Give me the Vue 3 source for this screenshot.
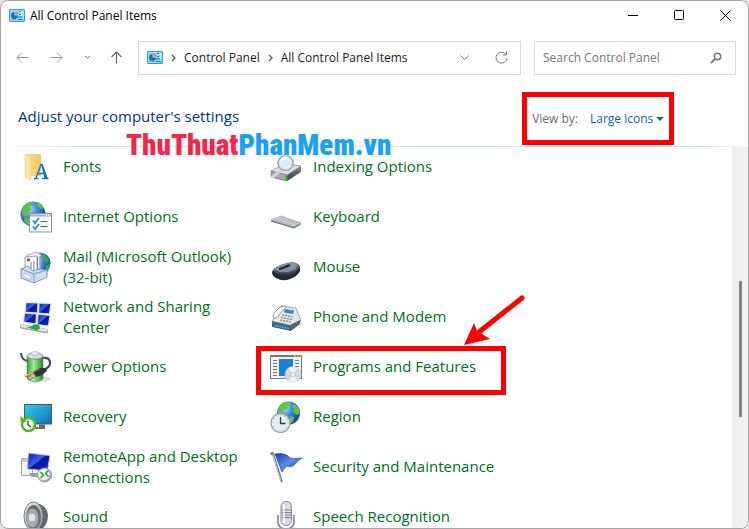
<template>
  <main class="window">
    <!-- Icon definitions -->
    <svg class="defs" width="0" height="0" aria-hidden="true">
      <defs>
        <linearGradient id="g-folder" x1="0" y1="0" x2="1" y2="0">
          <stop offset="0" stop-color="#f8dc8c" />
          <stop offset="1" stop-color="#f2ca62" />
        </linearGradient>
        <radialGradient id="g-globe" cx="0.35" cy="0.3" r="0.75">
          <stop offset="0" stop-color="#a9dcff" />
          <stop offset="0.45" stop-color="#3c86d8" />
          <stop offset="1" stop-color="#123c96" />
        </radialGradient>
        <linearGradient id="g-screen" x1="0" y1="0" x2="1" y2="1">
          <stop offset="0" stop-color="#0a18a8" />
          <stop offset="0.45" stop-color="#3a62e8" />
          <stop offset="0.5" stop-color="#0814a0" />
          <stop offset="1" stop-color="#1430c8" />
        </linearGradient>
        <linearGradient id="g-battery" x1="0" y1="0" x2="1" y2="0">
          <stop offset="0" stop-color="#2f9e33" />
          <stop offset="0.4" stop-color="#a4ee8e" />
          <stop offset="1" stop-color="#27892c" />
        </linearGradient>
        <linearGradient id="g-monitor" x1="0" y1="0" x2="1" y2="1">
          <stop offset="0" stop-color="#35d0e6" />
          <stop offset="1" stop-color="#0e6cbe" />
        </linearGradient>
        <linearGradient id="g-metal" x1="0" y1="0" x2="1" y2="1">
          <stop offset="0" stop-color="#f4f4f6" />
          <stop offset="1" stop-color="#8c9096" />
        </linearGradient>
        <linearGradient id="g-dark" x1="0" y1="0" x2="0" y2="1">
          <stop offset="0" stop-color="#8e98a6" />
          <stop offset="1" stop-color="#2c333d" />
        </linearGradient>
        <linearGradient id="g-flag" x1="0" y1="0" x2="1" y2="1">
          <stop offset="0" stop-color="#1c3cae" />
          <stop offset="0.5" stop-color="#5c8cf0" />
          <stop offset="1" stop-color="#1a35a0" />
        </linearGradient>
      </defs>

      <symbol id="panel" viewBox="0 0 16 13">
        <rect x="0.5" y="0.5" width="15" height="12" rx="0.5" fill="#8fdcfb" stroke="#2b9fe0" />
        <path d="M5.5 3v3.500H9A3.500 3.500 0 1 1 5.500 3Z" fill="#1470c4" />
        <path d="M6.500 2A3.500 3.500 0 0 1 9.500 5.500h-3Z" fill="#f28a1c" />
        <path d="M11 3.500h3M11 6h3M3 10.500h3" stroke="#fff" />
        <path d="M10 2.500h2M10 5.500h2M9 8h4" stroke="#1470c4" />
        <path d="M2 10.500h5" stroke="#f28a1c" />
        <path d="M9 10.500h5" stroke="#1478cc" />
      </symbol>

      <symbol id="fonts" viewBox="0 0 32 32">
        <path d="M5 3h16v22H8L5 24Z" fill="url(#g-folder)" />
        <path d="M5 3l6 3.500V29.500L5 26Z" fill="#fae6a8" stroke="#e9c76a" stroke-width="0.500" />
        <path d="M14 27.500h4.500M22 27.500h6.500M16 27 21 13.500h1L27 27M18 22.500h6" fill="none" stroke="#1173c4" stroke-width="1.300" />
        <path d="M21 13.500h1.500L27.500 27.500H24.500Z" fill="#1173c4" />
      </symbol>

      <symbol id="internet" viewBox="0 0 32 32">
        <circle cx="13" cy="13" r="12.500" fill="url(#g-globe)" />
        <path d="M3 6q4-5 9-5l1 3-3 2 1 3-4 3-1 5-4-4Zm14-5q5 1 7 6l-3 1-4-3ZM5 17l5 1 3 3-2 4q-5-2-7-5Z" fill="#5fc043" />
        <rect x="9.500" y="12.500" width="22" height="18.500" fill="#f7f8fa" stroke="#8d929b" />
        <path d="M10 14.500h21" stroke="#a7adb8" stroke-width="2" />
        <path d="M26 14.500h4" stroke="#fff" stroke-dasharray="1 1" />
        <path d="M13 19.500l2 2.500 4-5M13 25.500l2 2.500 4-5" fill="none" stroke="#168fd0" stroke-width="1.800" />
        <path d="M20.500 20.500h7M20.500 25.500h7" stroke="#5a6068" />
      </symbol>

      <symbol id="mail" viewBox="0 0 32 32">
        <circle cx="20" cy="12" r="10.500" fill="url(#g-globe)" />
        <path d="M19 2q8 1 10 8l-3 2-2-5-4-2ZM26 15l4-2q0 7-5 9Z" fill="#32ad43" />
        <path d="M7 4l10-3 4 3v17L7 20Z" fill="#e9effa" stroke="#7f91b5" stroke-width="0.700" />
        <path d="M5 6l12-1v17H5Z" fill="#fff" stroke="#7c8dae" stroke-width="0.800" />
        <path d="M11 11v10M14 10v11M17.500 6v15M20 5v15M22.500 7v12" stroke="#6483bb" />
        <path d="M7 7.500h3v3H7Z" fill="#e4401c" />
        <path d="M1 18l7-3 5 5 7-2 7 1v7L14 32 1 27Z" fill="#cfdef6" stroke="#6b80ab" stroke-width="0.800" />
        <path d="M1 18l13 5 13-4M14 23v9" fill="none" stroke="#8197c1" />
        <path d="M4 22l7 3v4l-7-3Z" fill="#edf4ff" stroke="#90a6d0" stroke-width="0.500" />
      </symbol>

      <symbol id="network" viewBox="0 0 32 32">
        <g fill="url(#g-screen)" stroke="#e4e6ec" stroke-width="1.200">
          <path d="M6 1.500 18 2 17.500 12 5 11Z" />
          <path d="M19 2 31 2.500 29.500 13 18.500 12Z" />
          <path d="M4.500 12 16.500 13 16 23 3.500 21Z" />
          <path d="M18 13 30 14.500 28.500 25 17 23.500Z" />
        </g>
        <path d="M2 25.500 26 30" stroke="#9fa5aa" stroke-width="4.500" stroke-linecap="round" />
        <path d="M2 25 26 29.500" stroke="#e4e9e5" stroke-width="2.500" stroke-linecap="round" />
        <path d="M6 26l5-.5 3-2h5l1 4-3 2Z" fill="#23ac43" />
      </symbol>

      <symbol id="power" viewBox="0 0 32 32">
        <ellipse cx="21" cy="28" rx="10" ry="3" fill="#ddd" />
        <path d="M1 2q0 6 6 8" fill="none" stroke="#4b4e63" stroke-width="2" />
        <path d="M7 5v23q8 6 16 0V5Z" fill="url(#g-battery)" stroke="#338337" stroke-width="0.500" />
        <ellipse cx="15" cy="5" rx="8" ry="3.200" fill="#d9dcde" stroke="#73777c" stroke-width="0.700" />
        <ellipse cx="15" cy="2.500" rx="4" ry="1.800" fill="#f5f6f6" stroke="#91959a" stroke-width="0.600" />
        <path d="M23 7q7-1 7 5 0 4-5 6" fill="none" stroke="#4b4e63" stroke-width="2.200" />
        <path d="M13 21l7-4 6 0 1 3-5 4-6 2Z" fill="#32343b" />
        <path d="M14 21l6-3" stroke="#70747e" />
        <path d="M5 25.500l9-4M8 28l8-3" stroke="#9a7442" stroke-width="2.200" />
        <path d="M5 25l8-3.500M8 27.500l7-2.500" stroke="#f2deae" />
      </symbol>

      <symbol id="recovery" viewBox="0 0 32 32">
        <rect x="4.500" y="3.500" width="27" height="19.500" fill="url(#g-monitor)" stroke="#4e555b" />
        <path d="M19 23.500h6v3h-6Z" fill="#62696e" />
        <path d="M15 27h10" stroke="#464b4f" stroke-width="1.500" />
        <circle cx="8.500" cy="23.500" r="6.500" fill="#fff" stroke="#54b71b" stroke-width="2.600" />
        <path d="M0 18h4l-3 4H0Z" fill="#fff" />
        <path d="M0.500 15v6h6.500Z" fill="#54b71b" />
        <path d="M8 19.500V24l3 2" fill="none" stroke="#333" stroke-width="1.200" />
      </symbol>

      <symbol id="remote" viewBox="0 0 32 32">
        <path d="M1.500 7.500h11v17h-11Z" fill="#f1f3f5" stroke="#a2a8af" />
        <path d="M2 9.500h10" stroke="#b7bec5" stroke-width="2" />
        <path d="M9 22h13v4H11Z" fill="#9aa0a7" />
        <path d="M8.500 2 30 4.500 27.500 20 7 18Z" fill="url(#g-screen)" stroke="#c5cbd2" />
        <circle cx="24.500" cy="24" r="7" fill="url(#g-metal)" stroke="#969ba0" />
        <circle cx="24" cy="23.500" r="5.500" fill="#edf1ed" />
        <path d="M20.500 21l3 3-3 3M28.500 19.500l-3 3 3 3" fill="none" stroke="#2f9b3c" stroke-width="1.500" />
      </symbol>

      <symbol id="sound" viewBox="0 0 32 32">
        <path d="M16 2q11 2 12 12 0 12-10 16l-5-3Z" fill="#62676b" />
        <ellipse cx="13.500" cy="15.500" rx="9.500" ry="14.500" fill="url(#g-metal)" stroke="#777c80" />
        <ellipse cx="13.500" cy="16" rx="7.500" ry="12" fill="#666b70" />
        <ellipse cx="12.500" cy="17" rx="6" ry="9.500" fill="#a4a9ad" />
        <ellipse cx="12" cy="16.500" rx="3" ry="4" fill="#e3e5e7" />
      </symbol>

      <symbol id="indexing" viewBox="0 -3 32 32">
        <path d="M1 17 15 9.500 31 12v6L17 27 1 23Z" fill="url(#g-dark)" />
        <path d="M1 17 15 9.500 31 12 17 21Z" fill="#dce0e3" stroke="#858b91" stroke-width="0.600" />
        <path d="M1 17.500 17 21v6L1 23Z" fill="#a5aab0" stroke="#6b7076" stroke-width="0.600" />
        <path d="M16 22.500l2 .5v2.500l-2-.5Z" fill="#36d623" stroke="#1b941b" />
        <path d="M12 15.500 2.500 23" stroke="#d4d7da" stroke-width="3" stroke-linecap="round" />
        <circle cx="15.500" cy="9" r="7.500" fill="#d9edff" fill-opacity="0.900" stroke="#9ba3ad" stroke-width="1.500" />
        <path d="M11 7q2-4 6-3" fill="none" stroke="#fff" stroke-width="2" />
      </symbol>

      <symbol id="keyboard" viewBox="0 0 32 32">
        <path d="M1 19.500 11 15.500 31 22.500 30 24 24 27.500 1 20.500Z" fill="#697078" />
        <path d="M1 19 11 15 31 22 23.500 26Z" fill="#d5d8dc" stroke="#8c9299" stroke-width="0.600" />
        <path d="M5 18.800l18 5.500M8 17.500l18 5.500M11 16.500l17 5.500" stroke="#8b9097" stroke-width="0.900" stroke-dasharray="1.500 0.800" />
      </symbol>

      <symbol id="mouse" viewBox="0 -1 32 32">
        <path d="M2 20q1-4 8-6 10-5 16-3 5 2 4 8-2 5-10 8-7 3-14-1-4-2-4-6Z" fill="#232a33" />
        <path d="M3 19q3-5 10-7 9-3 13-1 4 3 2 6-3 5-10 6-5 1-10-1-4-1-5-3Z" fill="url(#g-dark)" />
        <path d="M4 17.500q5-4 10-5.500 9-3 13 0 1 4-6 7-9 3-17-1.500Z" fill="#85909e" />
        <path d="M10 17 19 13.500" stroke="#1e2329" stroke-width="2.200" stroke-linecap="round" />
      </symbol>

      <symbol id="phone" viewBox="0 0 32 32">
        <path d="M2 20 11 5 26 7 31 20 22 27 4 25Z" fill="#e3e6e8" stroke="#83888e" stroke-width="0.700" />
        <path d="M2 20 20 24 30 19v4L21 30 2 26Z" fill="#5b6268" />
        <path d="M3 22.500l17 3.500v3L3 25.500Z" fill="#276fa5" />
        <path d="M5 24.500l14 3" stroke="#76cdf3" stroke-dasharray="1.500 1" />
        <path d="M15 8l9 1.500-1 3.500-9-1.500Z" fill="#2f88cf" />
        <path d="M12 14l11 2M11 16.500l11 2M10 19l11 2" stroke="#7e858b" stroke-width="1.200" stroke-dasharray="2 1" />
        <path d="M3 16q-1-2 3-6l4-4 5-1q2 2-2 4l-4 5q-3 5-6 2Z" fill="#fff" stroke="#777d83" stroke-width="0.800" />
      </symbol>

      <symbol id="programs" viewBox="0 -4 32 32">
        <rect x="0.500" y="0.500" width="31" height="23" fill="#f2f2f2" stroke="#787878" />
        <path d="M0 1h32" stroke="#777" stroke-width="2" />
        <path d="M24 1h7" stroke="#fff" stroke-dasharray="1.500 1.500" />
        <path d="M3 5.500h4M3 8.500h4M3 11.500h4M3 14.500h4M3 17.500h4M3 20.500h4M25 5.500h4M25 8.500h4M25 11.500h4" stroke="#777" />
        <path d="M9 4h14v17H9Z" fill="#1583d4" />
        <circle cx="23" cy="19.500" r="8" fill="#d6d8da" stroke="#b8bbbe" stroke-width="0.600" />
        <path d="M23 19.500 18.500 13q5-3 9 0ZM23 19.500 27.500 26q-5 3-9 0Z" fill="#f1f2f3" />
        <circle cx="23" cy="19.500" r="2" fill="#fff" stroke="#aaa" stroke-width="0.700" />
      </symbol>

      <symbol id="region" viewBox="0 0 32 32">
        <circle cx="18.500" cy="12" r="11.500" fill="url(#g-globe)" />
        <path d="M9 5q5-5 11-4l2 3-4 1-1 3-4 1-1 3-4 1ZM24 3q5 3 6 9l-3 2-4-3 1-3-2-2ZM20 15l4 1-1 5-3 1Z" fill="#62c645" />
        <circle cx="10.500" cy="22" r="9.500" fill="#e9edef" stroke="#9ba2a8" stroke-width="1.300" />
        <circle cx="10.500" cy="22" r="7.500" fill="none" stroke="#99a0a6" stroke-dasharray="1 2.900" />
        <path d="M10.500 16v6.500h5" fill="none" stroke="#30363c" stroke-width="1.300" />
      </symbol>

      <symbol id="security" viewBox="0 0 32 32">
        <path d="M3 3 11.500 30" stroke="#7e838a" stroke-width="2.400" stroke-linecap="round" />
        <path d="M2.500 3 10.500 29" stroke="#d0d4d8" stroke-linecap="round" />
        <circle cx="2" cy="2.500" r="1.700" fill="#878b90" />
        <path d="M5 3q5-1 9 0t6 4q5 1 12 0-5 3-8 7-3 3-7 1-3 2-5 6Z" fill="url(#g-flag)" stroke="#18328c" stroke-width="0.600" />
      </symbol>

      <symbol id="speech" viewBox="0 0 32 32">
        <path d="M8 14v6q0 8 8 8t8-8v-6M16 28v4" fill="none" stroke="#8d9098" stroke-width="1.800" />
        <rect x="11" y="0.500" width="10.500" height="24" rx="5" fill="#d9dbe5" stroke="#868994" />
        <path d="M12 9h9M12 11.500h9M12 14h9M12 16.500h9" stroke="#7c7f8b" />
        <path d="M14 3v20" stroke="#fff" stroke-width="1.500" />
      </symbol>
    </svg>

    <header class="title-bar">
      <svg class="panel-icon" aria-hidden="true"><use href="#panel" /></svg>
      <span class="title">All Control Panel Items</span>
      <button class="caption" type="button" aria-label="Minimize">
        <svg width="11" height="11" viewBox="0 0 11 11"><path d="M0 5.500h10" stroke="#000" /></svg>
      </button>
      <button class="caption" type="button" aria-label="Maximize">
        <svg width="11" height="11" viewBox="0 0 11 11"><rect x="0.500" y="0.500" width="9" height="9" rx="1" fill="none" stroke="#000" /></svg>
      </button>
      <button class="caption" type="button" aria-label="Close">
        <svg width="11" height="11" viewBox="0 0 11 11"><path d="M0.500 0.500l10 10M10.500 0.500l-10 10" stroke="#000" /></svg>
      </button>
    </header>

    <nav class="nav-bar">
      <button class="nav-btn" type="button" aria-label="Back">
        <svg width="13" height="13" viewBox="0 0 13 13"><path d="M12.500 6.500H1M6 1.500l-5 5 5 5" stroke="#999" /></svg>
      </button>
      <button class="nav-btn" type="button" aria-label="Forward">
        <svg width="13" height="13" viewBox="0 0 13 13"><path d="M0.500 6.500H12M7 1.500l5 5-5 5" stroke="#999" /></svg>
      </button>
      <button class="nav-btn narrow" type="button" aria-label="Recent locations">
        <svg width="7" height="5" viewBox="0 0 7 5"><path d="M1 1l2.500 2.500L6 1" stroke="#888" /></svg>
      </button>
      <button class="nav-btn narrow" type="button" aria-label="Up">
        <svg width="13" height="13" viewBox="0 0 13 13"><path d="M6.500 12.500V1M1.500 6l5-5 5 5" stroke="#666" stroke-width="1.200" /></svg>
      </button>

      <div class="address">
        <svg class="panel-icon" aria-hidden="true"><use href="#panel" /></svg>
        <template v-for="crumb in crumbs" :key="crumb">
          <svg class="sep" width="5" height="8" viewBox="0 0 5 8"><path d="M1 1l3 3-3 3" stroke="#555" stroke-width="1.300" /></svg>
          <a class="crumb" href="#">{{ crumb }}</a>
        </template>
        <button class="addr-btn" type="button" aria-label="Previous locations">
          <svg width="9" height="6" viewBox="0 0 9 6"><path d="M0.500 0.500l4 4 4-4" stroke="#777" /></svg>
        </button>
        <button class="addr-btn" type="button" aria-label="Refresh">
          <svg width="13" height="13" viewBox="0 0 13 13"><path d="M11 3.500A5.500 5.500 0 1 0 12 7M11.500 0.500v3.500H8" stroke="#777" /></svg>
        </button>
      </div>

      <form class="search" @submit.prevent>
        <input v-model="query" type="text" placeholder="Search Control Panel" aria-label="Search Control Panel" />
        <button type="submit" aria-label="Search">
          <svg width="12" height="12" viewBox="0 0 12 12"><circle cx="7.500" cy="4.500" r="3.200" stroke="#777" stroke-width="1.500" /><path d="M5 7l-4 4" stroke="#777" stroke-width="1.800" /></svg>
        </button>
      </form>
    </nav>

    <section class="settings-head">
      <h1>Adjust your computer's settings</h1>
      <div class="view-by">
        <label for="view">View by:</label>
        <select id="view" v-model="view">
          <option>Large icons</option>
          <option>Small icons</option>
          <option>Category</option>
        </select>
        <svg class="caret" width="8" height="4" viewBox="0 0 8 4"><path d="M0 0h8L4 4Z" fill="#0a62c4" /></svg>
      </div>
      <div class="watermark"><span class="red">ThuThuat</span><span class="blue">PhanMem.vn</span></div>
    </section>

    <section class="content">
      <div class="items">
        <a v-for="item in items" :key="item.icon" class="item" href="#">
          <svg class="item-icon" aria-hidden="true"><use :href="'#' + item.icon" /></svg>
          <span>{{ item.name }}</span>
          <template v-if="item.marked">
            <i class="mark"></i>
            <svg class="arrow" width="66" height="54" viewBox="0 0 66 54">
              <path d="M62 5 19 39" stroke="#fe0000" stroke-width="5" stroke-linecap="round" />
              <path d="M4 52 14 30 17 38 30 46Z" fill="#fe0000" />
            </svg>
          </template>
        </a>
      </div>
      <div class="scrollbar"><div class="thumb"></div></div>
    </section>
  </main>
</template>

<script setup>
import { ref } from 'vue'

const query = ref('')
const view = ref('Large icons')

const crumbs = ['Control Panel', 'All Control Panel Items']

const items = [
  { name: 'Fonts', icon: 'fonts' },
  { name: 'Indexing Options', icon: 'indexing' },
  { name: 'Internet Options', icon: 'internet' },
  { name: 'Keyboard', icon: 'keyboard' },
  { name: 'Mail (Microsoft Outlook) (32-bit)', icon: 'mail' },
  { name: 'Mouse', icon: 'mouse' },
  { name: 'Network and Sharing Center', icon: 'network' },
  { name: 'Phone and Modem', icon: 'phone' },
  { name: 'Power Options', icon: 'power' },
  { name: 'Programs and Features', icon: 'programs', marked: true },
  { name: 'Recovery', icon: 'recovery' },
  { name: 'Region', icon: 'region' },
  { name: 'RemoteApp and Desktop Connections', icon: 'remote' },
  { name: 'Security and Maintenance', icon: 'security' },
  { name: 'Sound', icon: 'sound' },
  { name: 'Speech Recognition', icon: 'speech' }
]
</script>

<style>
body {
  background: #e4e4e4;
}
</style>

<style scoped>
* {
  box-sizing: border-box;
}

.window {
  display: flex;
  flex-direction: column;
  height: 100vh;
  overflow: hidden;
  background: #fff;
  border: 1px solid #a5a5a5;
  border-radius: 8px;
  font-family: "Segoe UI", "Open Sans", "Noto Sans", sans-serif;
  font-size: 12px;
  color: #1a1a1a;
}

.defs {
  position: absolute;
}

button {
  display: flex;
  align-items: center;
  justify-content: center;
  padding: 0;
  border: none;
  background: none;
}

button svg,
.sep {
  fill: none;
}

a {
  color: inherit;
  text-decoration: none;
}

.panel-icon {
  flex: none;
  width: 16px;
  height: 13px;
}

.title-bar {
  display: flex;
  flex: none;
  align-items: center;
  height: 29px;
  padding-left: 8px;
}

.title {
  flex: 1;
  margin-left: 5px;
  color: #000;
}

.caption {
  width: 46px;
  height: 29px;
}

.nav-bar {
  display: flex;
  flex: none;
  align-items: center;
  height: 55px;
  padding: 0 12px 0 4px;
}

.nav-btn {
  width: 34px;
  height: 32px;
}

.nav-btn.narrow {
  width: 29px;
}

.address {
  display: flex;
  flex: 1;
  align-items: center;
  height: 34px;
  margin-left: 7px;
  padding-left: 8px;
  border: 1px solid #d9d9d9;
}

.sep {
  margin: 0 8px;
}

.crumb {
  white-space: nowrap;
}

.addr-btn {
  width: 37px;
  height: 32px;
}

.crumb + .addr-btn {
  margin-left: auto;
}

.search {
  display: flex;
  align-items: center;
  width: 202px;
  height: 34px;
  margin-left: 13px;
  padding: 0 13px 0 8px;
  border: 1px solid #d9d9d9;
}

.search input {
  flex: 1;
  min-width: 0;
  padding: 0;
  border: none;
  outline: none;
  font: inherit;
}

.search input::placeholder {
  color: #767676;
}

.settings-head {
  position: relative;
  display: flex;
  flex: none;
  align-items: flex-end;
  justify-content: space-between;
  height: 62px;
  padding: 0 74px 1px 17px;
  border-bottom: 1px solid;
  border-image: linear-gradient(to right, #fff, #d3e3f5 10%, #d3e3f5 95%, #fff) 1;
}

h1 {
  margin: 0 0 17px;
  font-size: 15px;
  font-weight: 400;
  line-height: 24px;
  color: #003399;
}

.view-by {
  display: flex;
  align-items: center;
  height: 53px;
  padding: 0 5px;
  border: 5px solid #fe0000;
}

.view-by label {
  color: #666c78;
}

.view-by select {
  width: 66px;
  margin-left: 12px;
  padding: 0;
  border: none;
  appearance: none;
  background: none;
  font: inherit;
  color: #0a62c4;
}

.watermark {
  position: absolute;
  left: 125px;
  bottom: -14px;
  z-index: 1;
  font-family: "Liberation Sans Narrow", "Roboto Condensed", "Liberation Sans", sans-serif;
  font-size: 29px;
  font-weight: 900;
  line-height: 30px;
  text-shadow: 0 0 2px #fff, 0 0 2px #fff, 0 0 3px #ddd;
}

.red {
  color: #f1264c;
}

.blue {
  color: #1ba1f2;
}

.content {
  display: flex;
  flex: 1;
  min-height: 0;
}

.items {
  display: grid;
  flex: 1;
  grid-template-columns: repeat(auto-fill, 250px);
  grid-auto-rows: 50px;
  align-content: start;
  overflow: hidden;
  margin-left: -1px;
}

.item {
  position: relative;
  display: flex;
  align-items: center;
  padding: 0 2px 11px 20px;
  font-size: 15px;
  line-height: 21px;
  color: #00701a;
}

.item-icon {
  flex: none;
  width: 32px;
  height: 32px;
  margin-right: 11px;
}

.mark {
  position: absolute;
  top: -1px;
  left: 6px;
  width: 250px;
  height: 49px;
  border: 5px solid #fe0000;
}

.arrow {
  position: absolute;
  top: -54px;
  left: 210px;
}

.scrollbar {
  width: 16px;
  padding: 134px 6px 0 7px;
  background: #efefef;
}

.thumb {
  height: 136px;
  background: #858585;
}
</style>
